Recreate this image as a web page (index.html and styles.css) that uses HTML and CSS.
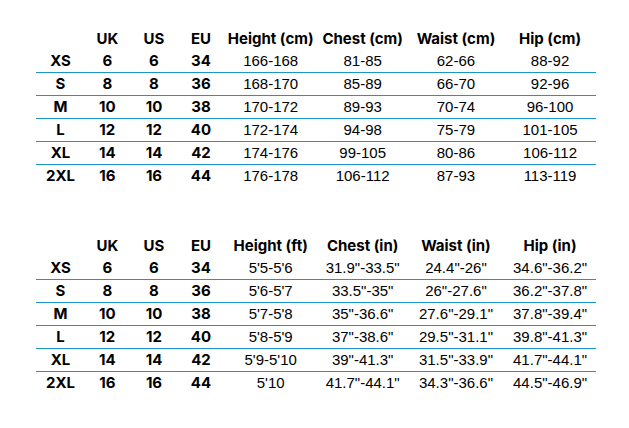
FILE: index.html
```html
<!DOCTYPE html>
<html lang="en">
<head>
<meta charset="utf-8">
<title>Size chart</title>
<link rel="stylesheet" href="styles.css">
</head>
<body>
<div class="page">
  <div class="chart">
    <div class="row head"><span></span><span>UK</span><span>US</span><span>EU</span><span>Height (cm)</span><span>Chest (cm)</span><span>Waist (cm)</span><span>Hip (cm)</span></div>
    <div class="row line"><b>XS</b><b>6</b><b>6</b><b>34</b><span>166-168</span><span>81-85</span><span>62-66</span><span>88-92</span></div>
    <div class="row line"><b>S</b><b>8</b><b>8</b><b>36</b><span>168-170</span><span>85-89</span><span>66-70</span><span>92-96</span></div>
    <div class="row line"><b>M</b><b>10</b><b>10</b><b>38</b><span>170-172</span><span>89-93</span><span>70-74</span><span>96-100</span></div>
    <div class="row line"><b>L</b><b>12</b><b>12</b><b>40</b><span>172-174</span><span>94-98</span><span>75-79</span><span>101-105</span></div>
    <div class="row line"><b>XL</b><b>14</b><b>14</b><b>42</b><span>174-176</span><span>99-105</span><span>80-86</span><span>106-112</span></div>
    <div class="row"><b>2XL</b><b>16</b><b>16</b><b>44</b><span>176-178</span><span>106-112</span><span>87-93</span><span>113-119</span></div>
  </div>
  <div class="chart">
    <div class="row head"><span></span><span>UK</span><span>US</span><span>EU</span><span>Height (ft)</span><span>Chest (in)</span><span>Waist (in)</span><span>Hip (in)</span></div>
    <div class="row line"><b>XS</b><b>6</b><b>6</b><b>34</b><span>5'5-5'6</span><span>31.9"-33.5"</span><span>24.4"-26"</span><span>34.6"-36.2"</span></div>
    <div class="row line"><b>S</b><b>8</b><b>8</b><b>36</b><span>5'6-5'7</span><span>33.5"-35"</span><span>26"-27.6"</span><span>36.2"-37.8"</span></div>
    <div class="row line"><b>M</b><b>10</b><b>10</b><b>38</b><span>5'7-5'8</span><span>35"-36.6"</span><span>27.6"-29.1"</span><span>37.8"-39.4"</span></div>
    <div class="row line"><b>L</b><b>12</b><b>12</b><b>40</b><span>5'8-5'9</span><span>37"-38.6"</span><span>29.5"-31.1"</span><span>39.8"-41.3"</span></div>
    <div class="row line"><b>XL</b><b>14</b><b>14</b><b>42</b><span>5'9-5'10</span><span>39"-41.3"</span><span>31.5"-33.9"</span><span>41.7"-44.1"</span></div>
    <div class="row"><b>2XL</b><b>16</b><b>16</b><b>44</b><span>5'10</span><span>41.7"-44.1"</span><span>34.3"-36.6"</span><span>44.5"-46.9"</span></div>
  </div>
</div>
</body>
</html>
```
FILE: styles.css
```css
html, body {
  margin: 0;
  padding: 0;
  background: #ffffff;
}
.page {
  padding: 28px 0 0 36px;
  display: flex;
  flex-direction: column;
  gap: 48px;
}
.chart {
  width: 560px;
  display: flex;
  flex-direction: column;
}
.row {
  display: grid;
  grid-template-columns: 49px 44.6px 48.8px 45.2px 94.2px 89.8px 96.8px 91.4px;
  height: 22px;
  align-items: center;
  font-family: "Liberation Sans", Arial, sans-serif;
  font-size: 15px;
  line-height: 22px;
  color: #000000;
}
.row.line {
  border-bottom: 1px solid #1b96c8;
}
.row > * {
  text-align: center;
  white-space: nowrap;
}
.row b,
.row.head span {
  font-family: Inter, Roboto, "Liberation Sans", sans-serif;
  font-weight: 700;
  font-size: 15px;
  color: #000000;
}
```
